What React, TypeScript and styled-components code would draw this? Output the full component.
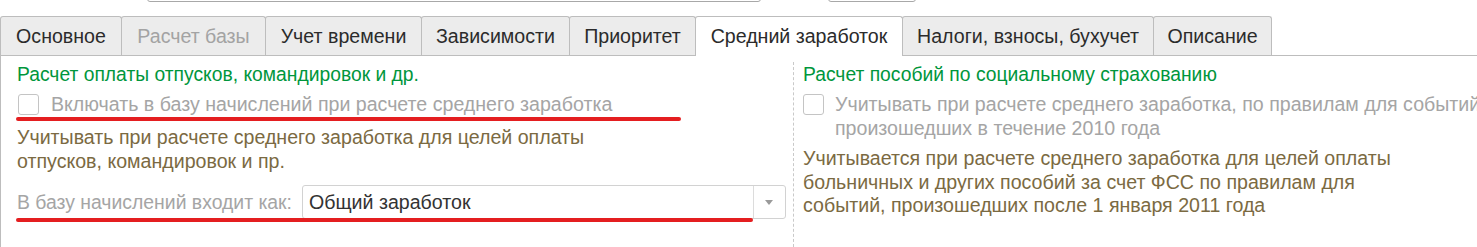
import styled, { createGlobalStyle } from "styled-components";

const GlobalStyle = createGlobalStyle`
  html, body {
    margin: 0;
    padding: 0;
    background: #fff;
  }
  body {
    font-family: "Liberation Sans", Arial, sans-serif;
    font-size: 19.6px;
  }
`;

const Page = styled.div`
  width: 1477px;
  height: 247px;
  overflow: hidden;
  background: #fff;
`;

const TopBar = styled.div`
  height: 2px;
  display: flex;
  align-items: flex-end;
  overflow: hidden;
`;

const TopField = styled.div<{ offset: number; width: number }>`
  flex-shrink: 0;
  margin-left: ${(p) => p.offset}px;
  width: ${(p) => p.width}px;
  height: 30px;
  box-sizing: border-box;
  border: 1px solid #a8a8a8;
  border-radius: 3px;
`;

const TabStrip = styled.div`
  margin-top: 14px;
  height: 40px;
  box-sizing: border-box;
  display: flex;
  align-items: flex-end;
  border-bottom: 1px solid #bdbdbd;
`;

const Tab = styled.div<{ width: number; active?: boolean; disabled?: boolean }>`
  flex-shrink: 0;
  width: ${(p) => p.width}px;
  height: ${(p) => (p.active ? 40 : 39)}px;
  margin-bottom: ${(p) => (p.active ? -1 : 0)}px;
  margin-right: -1px;
  box-sizing: border-box;
  display: flex;
  align-items: center;
  justify-content: center;
  padding-bottom: ${(p) => (p.active ? 1 : 0)}px;
  border: 1px solid #bdbdbd;
  border-bottom: none;
  border-radius: 3px 3px 0 0;
  background: ${(p) => (p.active ? "#fff" : "#ececec")};
  color: ${(p) => (p.disabled ? "#a3a3a3" : "#2b2b2b")};
  white-space: nowrap;
  position: relative;
  z-index: ${(p) => (p.active ? 1 : 0)};
`;

const Panel = styled.div`
  display: flex;
  height: 191px;
  box-sizing: border-box;
  padding-top: 7px;
  border-left: 1px solid #bdbdbd;
`;

const LeftCol = styled.div`
  position: relative;
  width: 792px;
  box-sizing: border-box;
  padding-left: 16px;
  flex-shrink: 0;
`;

const Divider = styled.div`
  margin-top: -1px;
  border-left: 1px dashed #c9c9c9;
  flex-shrink: 0;
`;

const RightCol = styled.div`
  padding-left: 9px;
  flex-shrink: 0;
`;

const GroupTitle = styled.div`
  color: #00963c;
  font-size: 19.3px;
  line-height: 24px;
  white-space: nowrap;
`;

const CheckRow = styled.div<{ labelGap: number }>`
  margin-top: 5px;
  display: flex;
  align-items: flex-start;
  gap: ${(p) => p.labelGap}px;
  line-height: 24px;
  white-space: nowrap;
`;

const Checkbox = styled.span<{ shift: number }>`
  flex-shrink: 0;
  width: 21px;
  height: 21px;
  margin-top: 2px;
  margin-left: ${(p) => p.shift}px;
  box-sizing: border-box;
  border: 1px solid #c4c4c4;
  border-radius: 3px;
  background: #fff;
`;

const CheckLabel = styled.span`
  color: #a5a5a5;
`;

const Note = styled.div<{ gapTop: number; lh: number }>`
  margin-top: ${(p) => p.gapTop}px;
  line-height: ${(p) => p.lh}px;
  color: #7b6a42;
  white-space: nowrap;
`;

const SelectRow = styled.div`
  margin-top: 12px;
  display: flex;
  align-items: center;
  gap: 10px;
  white-space: nowrap;
`;

const SelectLabel = styled.span`
  color: #a5a5a5;
  font-size: 19.4px;
`;

const SelectBox = styled.div`
  width: 484px;
  height: 34px;
  box-sizing: border-box;
  display: flex;
  border: 1px solid #d2d2d2;
  border-radius: 3px;
  background: #fff;
`;

const SelectValue = styled.div`
  flex: 1;
  display: flex;
  align-items: center;
  padding-left: 6px;
  color: #333;
`;

const SelectButton = styled.div`
  width: 31px;
  display: flex;
  align-items: center;
  justify-content: center;
  border-left: 1px solid #dcdcdc;
`;

const Arrow = styled.span`
  width: 0;
  height: 0;
  border-left: 4px solid transparent;
  border-right: 4px solid transparent;
  border-top: 5px solid #9a9a9a;
`;

const Marker = styled.div<{ left: number; top: number; width: number }>`
  position: absolute;
  left: ${(p) => p.left}px;
  top: ${(p) => p.top}px;
  width: ${(p) => p.width}px;
  height: 4px;
  border-radius: 2px;
  background: #e41e20;
`;

const tabs = [
  { title: "Основное", width: 122 },
  { title: "Расчет базы", width: 145, disabled: true },
  { title: "Учет времени", width: 157 },
  { title: "Зависимости", width: 149 },
  { title: "Приоритет", width: 127 },
  { title: "Средний заработок", width: 208, active: true },
  { title: "Налоги, взносы, бухучет", width: 252 },
  { title: "Описание", width: 119 },
];

export default function App() {
  return (
    <Page>
      <GlobalStyle />
      <TopBar>
        <TopField offset={147} width={614} />
        <TopField offset={67} width={88} />
      </TopBar>
      <TabStrip>
        {tabs.map((t) => (
          <Tab
            key={t.title}
            width={t.width}
            active={t.active}
            disabled={t.disabled}
          >
            {t.title}
          </Tab>
        ))}
      </TabStrip>
      <Panel>
        <LeftCol>
          <GroupTitle>Расчет оплаты отпусков, командировок и др.</GroupTitle>
          <CheckRow labelGap={12}>
            <Checkbox shift={1} />
            <CheckLabel>
              Включать в базу начислений при расчете среднего заработка
            </CheckLabel>
          </CheckRow>
          <Note gapTop={9} lh={24}>
            Учитывать при расчете среднего заработка для целей оплаты
            <br />
            отпусков, командировок и пр.
          </Note>
          <SelectRow>
            <SelectLabel>В базу начислений входит как:</SelectLabel>
            <SelectBox>
              <SelectValue>Общий заработок</SelectValue>
              <SelectButton>
                <Arrow />
              </SelectButton>
            </SelectBox>
          </SelectRow>
          <Marker left={15} top={54} width={665} />
          <Marker left={15} top={155} width={737} />
        </LeftCol>
        <Divider />
        <RightCol>
          <GroupTitle>Расчет пособий по социальному страхованию</GroupTitle>
          <CheckRow labelGap={11}>
            <Checkbox shift={0} />
            <CheckLabel>
              Учитывать при расчете среднего заработка, по правилам для событий
              <br />
              произошедших в течение 2010 года
            </CheckLabel>
          </CheckRow>
          <Note gapTop={7} lh={23.5}>
            Учитывается при расчете среднего заработка для целей оплаты
            <br />
            больничных и других пособий за счет ФСС по правилам для
            <br />
            событий, произошедших после 1 января 2011 года
          </Note>
        </RightCol>
      </Panel>
    </Page>
  );
}
